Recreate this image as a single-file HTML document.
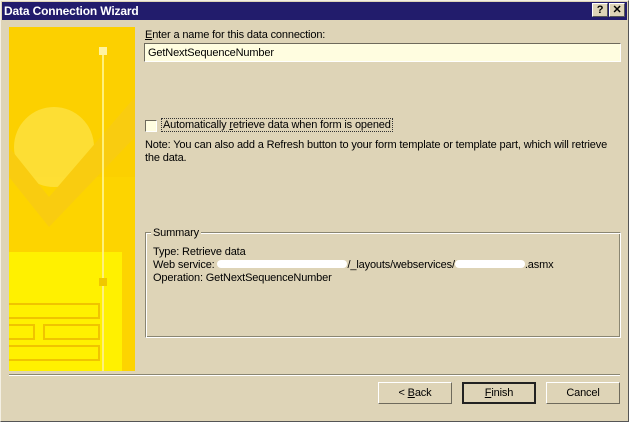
<!DOCTYPE html><html><head><style>
body{margin:0;width:629px;height:422px;background:#ded4b7;font-family:"Liberation Sans",sans-serif;font-size:11px;color:#000;position:relative;overflow:hidden;letter-spacing:-0.15px}
.a{position:absolute}
.btn{position:absolute;top:382px;width:74px;height:22px;background:#ded4b7;border:1px solid;border-color:#fff #6e6a5c #6e6a5c #fff;box-sizing:border-box;text-align:center;line-height:20px}
</style></head><body>
<div class="a" style="left:0;top:0;width:629px;height:422px;border:1px solid;border-color:#f4f0e4 #555 #555 #f4f0e4;box-sizing:border-box"></div>
<div class="a" style="left:2px;top:2px;width:625px;height:18px;background:#221c6c"></div>
<div class="a" style="left:4px;top:3px;color:#fff;font-weight:bold;font-size:12px;line-height:16px">Data Connection Wizard</div>
<div class="a" style="left:592px;top:3px;width:16px;height:14px;background:#ded4b7;border:1px solid;border-color:#fff #555 #555 #fff;box-sizing:border-box;font-weight:bold;font-size:11px;text-align:center;line-height:12px">?</div>
<div class="a" style="left:609px;top:3px;width:16px;height:14px;background:#ded4b7;border:1px solid;border-color:#fff #555 #555 #fff;box-sizing:border-box;font-weight:bold;font-size:11px;text-align:center;line-height:12px">✕</div>
<svg class="a" style="left:9px;top:27px" width="126" height="344">
<rect width="126" height="344" fill="#fdd400"/>
<rect x="0" y="0" width="126" height="150" fill="#fcd000"/>
<circle cx="45" cy="120" r="40" fill="#fde44a" opacity=".7"/>
<path d="M0 120 L40 170 L126 70 L126 110 L40 200 L0 150Z" fill="#f9cc10"/>
<rect x="0" y="225" width="113" height="119" fill="#fff100"/>
<rect x="90" y="20" width="8" height="8" fill="#fff3a0"/>
<line x1="94" y1="28" x2="94" y2="344" stroke="#fff07a" stroke-width="2"/>
<rect x="90" y="251" width="8" height="8" fill="#f0c800"/>
<g fill="none" stroke="#f0c400" stroke-width="2"><rect x="-5" y="277" width="95" height="14"/><rect x="-5" y="298" width="30" height="14"/><rect x="35" y="298" width="55" height="14"/><rect x="-5" y="319" width="95" height="14"/></g>
</svg>
<div class="a" style="left:9px;top:374px;width:611px;height:1px;background:#8a8672;border-bottom:1px solid #fff"></div>
<div class="a" style="left:145px;top:29px"><u>E</u>nter a name for this data connection:</div>
<div class="a" style="left:144px;top:43px;width:477px;height:19px;background:#fffde0;border:1px solid;border-color:#6e6a5c #fff #fff #6e6a5c;box-sizing:border-box;padding:3px 3px 0">GetNextSequenceNumber</div>
<div class="a" style="left:145px;top:120px;width:12px;height:12px;background:#fffde0;border:1px solid;border-color:#6e6a5c #fff #fff #6e6a5c;box-sizing:border-box"></div>
<div class="a" style="left:161px;top:118px;border:1px dotted #333;padding:0 1px">Automatically <u>r</u>etrieve data when form is opened</div>
<div class="a" style="left:145px;top:139px;width:476px;line-height:13px">Note: You can also add a Refresh button to your form template or template part, which will retrieve the data.</div>
<div class="a" style="left:145px;top:232px;width:476px;height:106px;border:1px solid;border-color:#8a8672 #fff #fff #8a8672;box-sizing:border-box;box-shadow:inset 1px 1px 0 #fff,inset -1px -1px 0 #8a8672"></div>
<div class="a" style="left:151px;top:227px;background:#ded4b7;padding:0 2px">Summary</div>
<div class="a" style="left:153px;top:246px;line-height:13px">Type: Retrieve data<br>Web service: <span style="display:inline-block;width:130px;height:8px;background:#fff;border-radius:4px"></span>/_layouts/webservices/<span style="display:inline-block;width:70px;height:8px;background:#fff;border-radius:4px"></span>.asmx<br>Operation: GetNextSequenceNumber</div>
<div class="btn" style="left:378px">&lt; <u>B</u>ack</div>
<div class="btn" style="left:462px;border:2px solid #222;line-height:18px"><u>F</u>inish</div>
<div class="btn" style="left:546px">Cancel</div>
</body></html>
